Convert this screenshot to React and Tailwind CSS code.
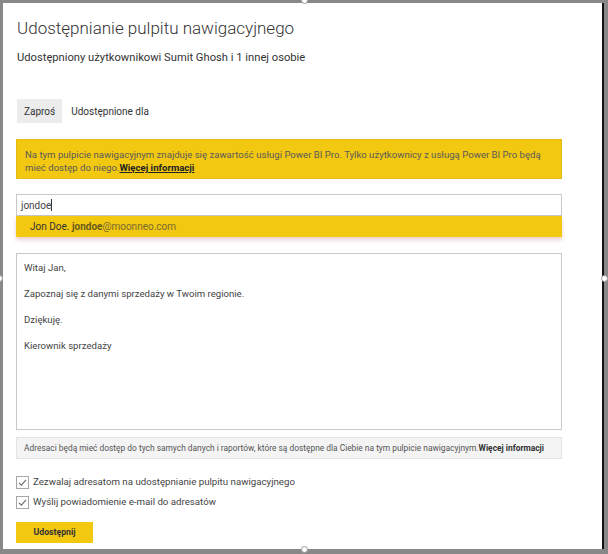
import React from 'react'

const font = { fontFamily: 'Roboto, "Open Sans", sans-serif' }

function Check() {
  return (
    <span className="w-[13px] h-[13px] border border-[#a6a6a6] bg-white flex items-center justify-center shrink-0">
      <svg width="9" height="9" viewBox="0 0 9 9" fill="none">
        <polyline points="1,4.8 3.4,7.2 8,1.8" stroke="#6b6b6b" strokeWidth="1.1" />
      </svg>
    </span>
  )
}

function Handle({ className }) {
  return <span className={'absolute w-[7px] h-[7px] rounded-full border border-[#9a9a9a] bg-white ' + className} />
}

export default function App() {
  return (
    <div className="w-[608px] h-[554px] bg-[#888888] pt-[3px] pl-[3px] relative overflow-hidden" style={font}>
      <div className="w-[601px] h-[546px] bg-white border-r-2 border-[#111111] pl-[13px] pr-[40px] text-[#333333] flex flex-col">
        <h1 className="text-[17px] leading-[24px] font-light mt-[13px] ml-px text-[#333333] whitespace-nowrap">
          Udostępnianie pulpitu nawigacyjnego
        </h1>
        <p className="text-[11.2px] leading-[16px] mt-[10px] ml-px text-[#333333] whitespace-nowrap">
          Udostępniony użytkownikowi Sumit Ghosh i 1 innej osobie
        </p>

        <div className="flex items-center mt-[33px] h-[24px] text-[10px]">
          <span className="h-full ml-px px-[7px] bg-[#ececec] flex items-center">Zaproś</span>
          <span className="px-[9px]">Udostępnione dla</span>
        </div>

        <div className="mt-[16px] h-[40px] bg-[#f2c811] border border-[#e2bb10] pl-[8px] pr-[4px] pt-[8px] text-[9.6px] leading-[13px] text-[#5a5a5a]">
          Na tym pulpicie nawigacyjnym znajduje się zawartość usługi Power BI Pro. Tylko użytkownicy z usługą Power BI Pro będą mieć dostęp do niego.
          <span className="font-bold text-[#222222] underline">Więcej informacji</span>
        </div>

        <div className="mt-[15px] h-[22px] border border-[#c8c8c8] flex items-center pl-[4px] text-[10px] text-[#444444]">
          jondoe<span className="w-px h-[12px] bg-[#333333]" />
        </div>
        <div className="h-[21px] bg-[#f2c811] shadow-[0_3px_4px_rgba(200,120,120,0.35)] flex items-center pl-[14px] text-[10px] text-[#333333]">
          Jon Doe.&nbsp;<span className="font-bold text-[#6b5a1a]">jondoe</span>
          <span className="text-[#7a6a30]">@moonneo.com</span>
        </div>

        <div className="mt-[16px] h-[177px] border border-[#c8c8c8] pl-[7px] pt-[6px] text-[9.6px] leading-[16px] text-[#444444] flex flex-col gap-[10px]">
          <p>Witaj Jan,</p>
          <p>Zapoznaj się z danymi sprzedaży w Twoim regionie.</p>
          <p>Dziękuję.</p>
          <p>Kierownik sprzedaży</p>
        </div>

        <div className="mt-[7px] h-[22px] bg-[#f4f4f4] border border-[#e3e3e3] flex items-center pl-[7px] text-[8.4px] text-[#555555] whitespace-nowrap">
          Adresaci będą mieć dostęp do tych samych danych i raportów, które są dostępne dla Ciebie na tym pulpicie nawigacyjnym.
          <span className="font-bold text-[#333333]">Więcej informacji</span>
        </div>

        <div className="mt-[15px] flex flex-col gap-[4px] text-[9.7px] text-[#444444]">
          <label className="flex items-center gap-[4px] h-[16px]">
            <Check />
            <span>Zezwalaj adresatom na udostępnianie pulpitu nawigacyjnego</span>
          </label>
          <label className="flex items-center gap-[4px] h-[16px]">
            <Check />
            <span>Wyślij powiadomienie e-mail do adresatów</span>
          </label>
        </div>

        <button className="mt-[12px] w-[77px] h-[21px] bg-[#f2c811] text-[8.7px] font-bold text-[#333333] flex items-center justify-center">
          Udostępnij
        </button>
      </div>
      <Handle className="left-[-4px] top-[275px]" />
      <Handle className="left-[601px] top-[275px]" />
      <Handle className="left-[301px] top-[-3px]" />
      <Handle className="left-[301px] top-[546px]" />
    </div>
  )
}
